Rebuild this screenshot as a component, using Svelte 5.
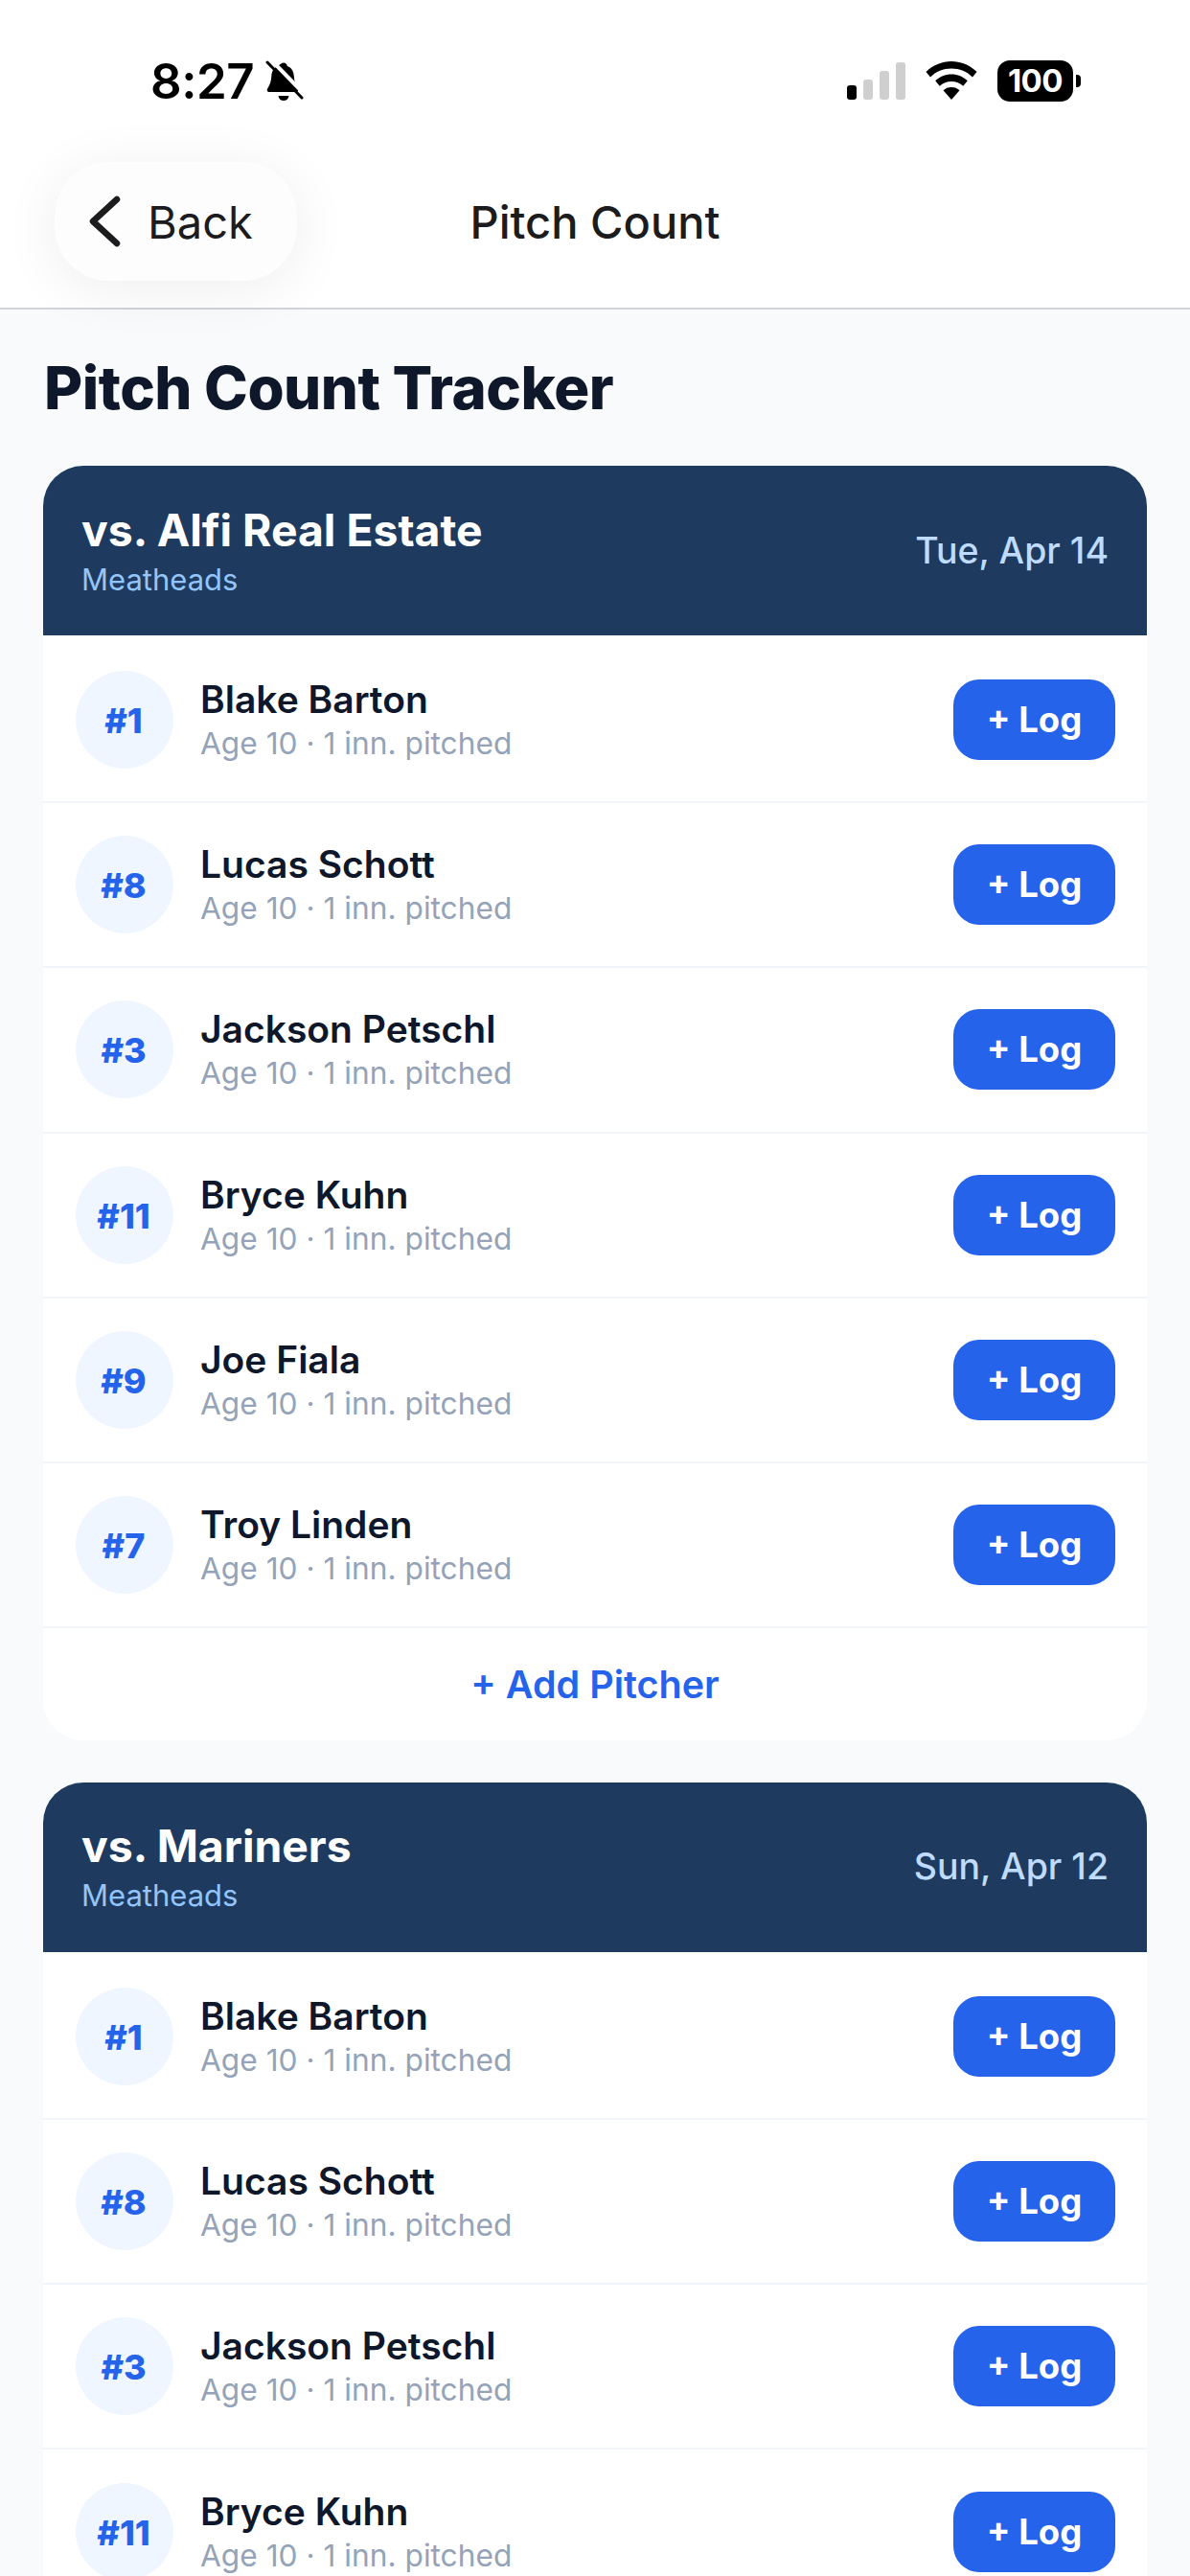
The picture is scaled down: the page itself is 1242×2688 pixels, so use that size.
<script lang="ts">
  const pitchers = [
    { num: 1, name: 'Blake Barton' },
    { num: 8, name: 'Lucas Schott' },
    { num: 3, name: 'Jackson Petschl' },
    { num: 11, name: 'Bryce Kuhn' },
    { num: 9, name: 'Joe Fiala' },
    { num: 7, name: 'Troy Linden' }
  ];

  const games = [
    { opponent: 'Alfi Real Estate', team: 'Meatheads', date: 'Tue, Apr 14' },
    { opponent: 'Mariners', team: 'Meatheads', date: 'Sun, Apr 12' }
  ];
</script>

<div class="screen">
  <header class="top">
    <div class="status">
      <div class="status-left">
        <span class="time">8:27</span>
        <svg class="bell" viewBox="0 0 40 42" width="40" height="42" aria-hidden="true">
          <path transform="translate(-2 1.5)" d="M21 1c2 0 3.500 1.500 3.800 3.500 4.700 1.500 6.700 5.700 7 10.500.3 4.800 1.400 8.700 4 12.700 1.200 1.700.3 3.800-1.700 3.800H6c-2 0-2.900-2.100-1.700-3.800 2.600-4 3.700-7.900 4-12.700.3-4.800 2.300-9 7-10.500C17.600 2.500 19 1 21 1z" fill="#000"/>
          <path d="M13.500 37h11c-.4 3-2.500 5-5.500 5s-5.100-2-5.500-5z" fill="#000"/>
          <path d="M5.500 -1L41 35.500" stroke="#fff" stroke-width="4" fill="none"/>
          <path d="M2 2l36 37" stroke="#000" stroke-width="3" stroke-linecap="round" fill="none"/>
        </svg>
      </div>
      <div class="status-right">
        <div class="signal" aria-hidden="true">
          <i class="bar on b1"></i><i class="bar b2"></i><i class="bar b3"></i><i class="bar b4"></i>
        </div>
        <svg class="wifi" viewBox="0 0 54 40" width="54" height="40" aria-hidden="true">
          <path d="M27 0c10 0 19.500 4 26.500 11L49 16.500C43.200 10.600 35.400 7.500 27 7.500S10.800 10.600 5 16.500L.5 11C7.500 4 17 0 27 0z"/>
          <path d="M27 13.500c6.400 0 12.300 2.500 16.800 6.800l-4.500 5.400C36 22.600 31.700 21 27 21s-9 1.600-12.300 4.700l-4.500-5.400C14.700 16 20.600 13.500 27 13.500z"/>
          <path d="M27 27c3.300 0 6.300 1.200 8.500 3.300L27 40l-8.500-9.700C20.700 28.200 23.700 27 27 27z"/>
        </svg>
        <div class="battery">
          <span class="level">100</span>
          <i class="nub"></i>
        </div>
      </div>
    </div>
    <nav class="nav">
      <div class="nav-side">
        <button class="back">
          <svg viewBox="0 0 36 60" width="36" height="60" aria-hidden="true">
            <path d="M30 7L5 30l25 23" fill="none" stroke="#1c1c1e" stroke-width="6.5" stroke-linecap="round" stroke-linejoin="round"/>
          </svg>
          <span>Back</span>
        </button>
      </div>
      <div class="nav-title">Pitch Count</div>
      <div class="nav-side"></div>
    </nav>
  </header>

  <main class="content">
    <h1>Pitch Count Tracker</h1>
    {#each games as game}
      <section class="card">
        <div class="card-head">
          <div>
            <div class="opponent">vs. {game.opponent}</div>
            <div class="team">{game.team}</div>
          </div>
          <div class="date">{game.date}</div>
        </div>
        {#each pitchers as p}
          <div class="row">
            <div class="avatar">#{p.num}</div>
            <div class="info">
              <div class="name">{p.name}</div>
              <div class="meta">Age 10 · 1 inn. pitched</div>
            </div>
            <button class="log">+ Log</button>
          </div>
        {/each}
        <button class="add">+ Add Pitcher</button>
      </section>
    {/each}
  </main>
</div>

<style>
  :global(body) {
    margin: 0;
    background: #f8fafc;
  }

  .screen {
    height: 2688px;
    overflow: hidden;
    font-family: Inter, "Liberation Sans", sans-serif;
    background: #f8fafc;
  }

  button {
    font-family: inherit;
    border: none;
    cursor: pointer;
  }

  /* top bar */

  .top {
    background: #fff;
    border-bottom: 2px solid #d1d5db;
  }

  .status {
    display: flex;
    justify-content: space-between;
    align-items: center;
    height: 168px;
    padding: 0 114px 0 157px;
    box-sizing: border-box;
    color: #000;
  }

  .status-left {
    display: flex;
    align-items: center;
    gap: 12px;
  }

  .time {
    font-size: 51px;
    font-weight: 600;
    letter-spacing: -0.5px;
  }

  .status-right {
    display: flex;
    align-items: center;
    gap: 21px;
  }

  .signal {
    display: flex;
    align-items: flex-end;
    gap: 6.5px;
    height: 39px;
  }

  .bar {
    width: 10.5px;
    background: #cfcfcf;
    border-radius: 3px;
  }

  .bar.on { background: #000; }
  .b1 { height: 15px; }
  .b2 { height: 21px; }
  .b3 { height: 30px; }
  .b4 { height: 39px; }

  .battery {
    display: flex;
    align-items: center;
    gap: 3px;
  }

  .level {
    display: block;
    width: 79px;
    height: 43px;
    line-height: 43px;
    text-align: center;
    background: #000;
    color: #fff;
    border-radius: 13px;
    font-size: 33px;
    font-weight: 700;
    letter-spacing: -0.5px;
  }

  .nub {
    width: 5px;
    height: 13px;
    background: #000;
    border-radius: 0 4px 4px 0;
  }

  .nav {
    display: grid;
    grid-template-columns: 1fr auto 1fr;
    align-items: center;
    padding: 1px 57px 28px;
  }

  .back {
    display: flex;
    align-items: center;
    gap: 26px;
    width: 253px;
    height: 124px;
    padding: 0 0 0 35px;
    background: #fdfdfd;
    border-radius: 56px;
    box-shadow: 0 8px 60px rgba(0, 0, 0, 0.07);
    color: #1c1c1e;
    font-size: 47px;
    font-weight: 400;
  }

  .nav-title {
    color: #1c1c1e;
    font-size: 47px;
    font-weight: 500;
  }

  /* cards */

  .content {
    padding: 44px 45px 0;
  }

  h1 {
    margin: 0 0 44px 1px;
    font-size: 61.7px;
    line-height: 75px;
    font-weight: 800;
    color: #0f172a;
    letter-spacing: -0.5px;
  }

  .card {
    margin-bottom: 44px;
    background: #fff;
    border-radius: 42px;
    overflow: hidden;
  }

  .card-head {
    display: flex;
    justify-content: space-between;
    align-items: center;
    height: 177px;
    margin-bottom: 3px;
    padding: 0 40px 1px 40px;
    box-sizing: border-box;
    background: #1e3a5f;
  }

  .opponent {
    font-size: 46.3px;
    line-height: 54px;
    font-weight: 700;
    color: #fff;
  }

  .team {
    margin-top: 7px;
    font-size: 31px;
    line-height: 36px;
    color: #93c5fd;
  }

  .date {
    font-size: 37.5px;
    font-weight: 500;
    color: #bfdbfe;
  }

  .row {
    display: flex;
    align-items: center;
    height: 172.2px;
    padding: 0 33px 0 34px;
    box-sizing: border-box;
    border-bottom: 2px solid #f1f5f9;
  }

  .avatar {
    flex: none;
    display: flex;
    align-items: center;
    justify-content: center;
    width: 102px;
    height: 102px;
    padding: 2px 2px 0 0;
    box-sizing: border-box;
    border-radius: 50%;
    background: #eff6ff;
    color: #2563eb;
    font-size: 36px;
    font-weight: 800;
  }

  .info {
    flex: 1;
    margin-left: 28px;
  }

  .name {
    font-size: 39px;
    line-height: 46px;
    font-weight: 600;
    color: #0f172a;
  }

  .meta {
    margin-top: 4px;
    font-size: 31.7px;
    line-height: 38px;
    color: #94a3b8;
  }

  .log {
    width: 169px;
    height: 84px;
    border-radius: 27px;
    background: #2563eb;
    color: #fff;
    font-size: 36.5px;
    font-weight: 700;
  }

  .add {
    display: block;
    width: 100%;
    height: 116.8px;
    background: none;
    color: #2563eb;
    font-size: 39.5px;
    font-weight: 600;
  }
</style>
